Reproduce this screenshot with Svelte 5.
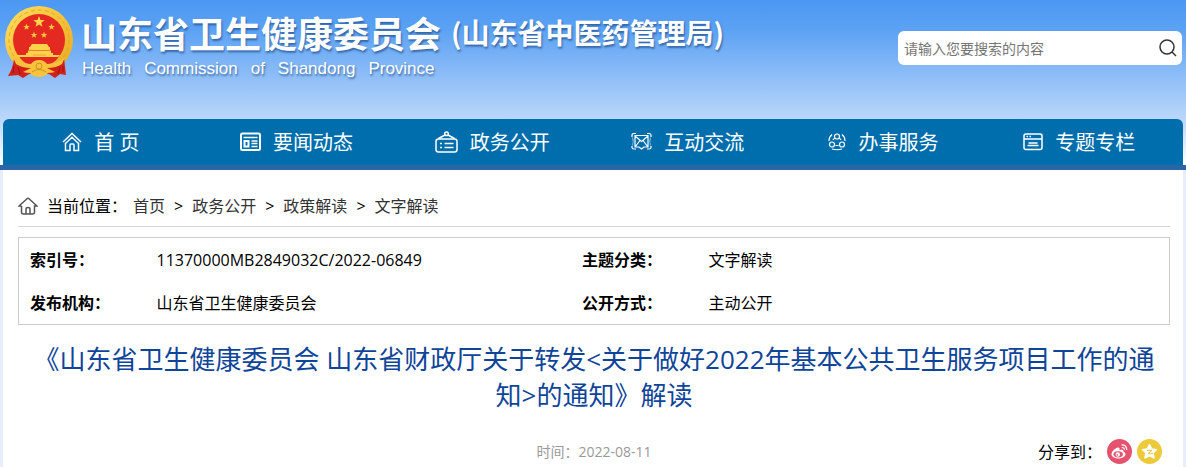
<script>
	let keyword = "";

	const navItems = [
		{ title: "首 页", icon: "home" },
		{ title: "要闻动态", icon: "news" },
		{ title: "政务公开", icon: "board" },
		{ title: "互动交流", icon: "mail" },
		{ title: "办事服务", icon: "service" },
		{ title: "专题专栏", icon: "topic" },
	];

	const crumbs = ["首页", "政务公开", "政策解读", "文字解读"];

	const rows = [
		["索引号：", "11370000MB2849032C/2022-06849", "主题分类：", "文字解读"],
		["发布机构：", "山东省卫生健康委员会", "公开方式：", "主动公开"],
	];

	const star = "M0-5 1.2-1.6 4.8-1.5 1.9.6 2.9 4 0 2-2.9 4-1.9.6-4.8-1.5-1.2-1.6Z";
	const smallStars = [
		[21.5, 21],
		[46.5, 21],
		[29, 29],
		[39, 29],
	];
</script>

<div class="page">
	<header>
		<a class="brand" href="#top">
			<svg class="emblem" viewBox="0 0 68 73" aria-hidden="true">
				<defs>
					<linearGradient id="gold" x1="0" y1="0" x2="1" y2="1">
						<stop offset="0" stop-color="#ffe060" />
						<stop offset="0.5" stop-color="#f5c23a" />
						<stop offset="1" stop-color="#e6a822" />
					</linearGradient>
				</defs>
				<circle cx="34" cy="34" r="34" fill="url(#gold)" />
				<circle cx="34" cy="34" r="30" fill="none" stroke="#e2a72c" stroke-width="1" stroke-dasharray="4 3" />
				<circle cx="34" cy="34" r="26" fill="#e42a20" />
				<path transform="translate(34 16) scale(1.2)" d={star} fill="#fbd84b" />
				{#each smallStars as [x, y]}
					<path transform={`translate(${x} ${y}) scale(.7)`} d={star} fill="#f8c93f" />
				{/each}
				<path d="M25 41 27 38H42L44 41ZM24 41H45V44H24ZM23 44.500H46V47H48V49H55L53 51H14L12 49H21V47H23Z" fill="#fbd24a" />
				<path d="M28 49H41" stroke="#e5a92e" />
				<path d="M9 53Q8 62 3 70L13 69 18 72 24 68H44L50 72 55 68 61 69 59 52Q57 55 53 58L15 58Q11 56 9 53Z" fill="#d4201a" />
				<path d="M15 51.500H53Q50 57 42 59L34 54 26 59Q18 57 15 51.500Z" fill="#e42a20" />
				<path d="M8 51Q15 58 26 58Q29 54 34 54T42 58Q53 58 60 51L57 58Q51 62 42 62L50 66Q46 67 43 67Q40 71 34 71T25 67Q21 67 18 66L26 62Q17 62 11 58Z" fill="#f6c43c" />
				<circle cx="34" cy="60" r="3" fill="none" stroke="#cf9120" />
				<path d="M27 66Q34 61 41 66" fill="none" stroke="#cf9120" />
				<path d="M13 61 15 68M9 60 8 67M55 61 53 68M58 60 58 66" fill="none" stroke="#9f120f" />
			</svg>
			<span class="names">
				<span class="zh">
					<strong>山东省卫生健康委员会</strong>
					<strong class="sub">(山东省中医药管理局)</strong>
				</span>
				<span class="en">
					<span>Health</span>
					<span>Commission</span>
					<span>of</span>
					<span>Shandong</span>
					<span>Province</span>
				</span>
			</span>
		</a>
		<form class="search" on:submit|preventDefault>
			<input type="text" aria-label="搜索" placeholder="请输入您要搜索的内容" bind:value={keyword} />
			<button type="submit" aria-label="搜索">
				<svg width="18" height="18" viewBox="0 0 18 18">
					<circle cx="8" cy="8" r="7" />
					<path d="M13 13 17 17" />
				</svg>
			</button>
		</form>
	</header>

	<nav>
		<ul>
			{#each navItems as item}
				<li>
					<a href="#top">
						{#if item.icon === "home"}
							<svg width="20" height="20" viewBox="0 0 20 20">
								<path d="M1 10 10 1.500 19 10M4 11 10 5.300 16 11M3.500 10.500V18.500H8V13Q8 12 9 12H11Q12 12 12 13V18.500H16.500V10.500" />
							</svg>
						{:else if item.icon === "news"}
							<svg width="21" height="20" viewBox="0 0 21 20">
								<rect x="1" y="1.500" width="19" height="16.500" rx="1.500" stroke-width="2" />
								<path d="M3.500 5.500H17.500M11.500 9H17.500M11.500 11.500H17.500M11.500 14.500H17.500" stroke-width="1.500" />
								<rect x="4.500" y="9" width="4" height="5.500" stroke-width="2" />
							</svg>
						{:else if item.icon === "board"}
							<svg width="23" height="23" viewBox="0 0 23 23">
								<rect x="1" y="8" width="21" height="13" rx="2.500" />
								<circle cx="11.500" cy="2.700" r="1.800" />
								<path d="M3.500 7.500 10 4M19.500 7.500 13 4M5 12.500H7M9.500 12.500H18.500M5 16.500H7M9.500 16.500H18.500" />
							</svg>
						{:else if item.icon === "mail"}
							<svg width="21" height="20" viewBox="0 0 21 20" class="thin">
								<path d="M4 3.500H17V15H13L10.500 17 8 15H4ZM4 4 10.500 9.500 17 4M4 15 9 8.500M17 15 12 8.500M1 5V3.500Q1 1.500 3 1.500H5M16 1.500H18Q20 1.500 20 3.500V5M1 14V15.500Q1 17 3 17H5M16 17H18Q20 17 20 15.500V14" />
								<path d="M1.500 5.500Q3 9.500 1.500 13.500M19.500 5.500Q18 9.500 19.500 13.500" opacity="0.5" />
							</svg>
						{:else if item.icon === "service"}
							<svg width="18" height="20" viewBox="0 0 18 20" class="thin">
								<circle cx="9" cy="4.500" r="2.500" />
								<circle cx="4" cy="12.500" r="2.500" />
								<circle cx="14" cy="12.500" r="2.500" />
								<path d="M5 8Q5.500 6.500 7 6.500M13 8Q12.500 6.500 11 6.500M4 2.500Q1 5 1 9M14 2.500Q17 5 17 9M4 17Q9 18.500 14 17M7.500 13.500H10.500" />
							</svg>
						{:else}
							<svg width="20" height="20" viewBox="0 0 20 20">
								<rect x="1" y="2" width="18" height="15.500" rx="2" />
								<path d="M1 7H19M3.500 4.500H5M6.500 4.500H8M5.500 11H14.500M4.500 13.500H15.500" />
							</svg>
						{/if}
						<span>{item.title}</span>
					</a>
				</li>
			{/each}
		</ul>
	</nav>

	<main>
		<div class="crumbs">
			<svg width="20" height="18" viewBox="0 0 20 18" aria-hidden="true">
				<path d="M3.500 9H1L9 1.700Q10 .8 11 1.700L19 9H16.500V15Q16.500 17 14.500 17H5.500Q3.500 17 3.500 15V9M8 17V12Q8 10.500 10 10.500T12 12V17" />
			</svg>
			<span class="label">当前位置：</span>
			{#each crumbs as crumb, i}
				{#if i > 0}<span class="sep">&gt;</span>{/if}
				<a href="#top">{crumb}</a>
			{/each}
		</div>

		<table>
			<tbody>
				{#each rows as row}
					<tr>
						<th scope="row">{row[0]}</th>
						<td class="wide">{row[1]}</td>
						<th scope="row">{row[2]}</th>
						<td>{row[3]}</td>
					</tr>
				{/each}
			</tbody>
		</table>

		<h1>《山东省卫生健康委员会 山东省财政厅关于转发&lt;关于做好2022年基本公共卫生服务项目工作的通知&gt;的通知》解读</h1>

		<div class="meta">
			<time datetime="2022-08-11">时间：2022-08-11</time>
			<div class="share">
				<span>分享到：</span>
				<a href="#weibo" aria-label="微博">
					<svg width="25" height="25" viewBox="0 0 25 25">
						<circle cx="12.500" cy="12.500" r="12.500" fill="#e6516e" />
						<path d="M11 8.500C8 9 4.500 12.500 4.500 15.300C4.500 18 8 19.500 11.500 19.500C15.500 19.500 18.500 17.200 18.500 15C18.500 13.600 17.500 13 16.300 12.700C16.800 11 15.300 10.300 12.500 11.300C12.800 9.500 12.500 8.300 11 8.500Z" fill="#fff" />
						<ellipse cx="11.200" cy="15.300" rx="4.700" ry="3.100" fill="#e6516e" />
						<circle cx="10.800" cy="15.500" r="2.200" fill="#fff" />
						<circle cx="10.300" cy="15.900" r=".8" fill="#e6516e" />
						<path d="M14.500 6Q19.500 5.500 19.800 11M14.800 8.500Q17.200 8.300 17.400 10.800" fill="none" stroke="#fff" stroke-width="1.200" />
					</svg>
				</a>
				<a href="#qzone" aria-label="QQ空间">
					<svg width="25" height="25" viewBox="0 0 25 25">
						<circle cx="12.500" cy="12.500" r="12.500" fill="#ecca3a" />
						<path d="M12.500 5 14.900 9.800 20 10.500 16.400 14.100 17.300 19.300 12.500 17 7.700 19.300 8.600 14.100 5 10.500 10.100 9.800Z" fill="#fff" stroke="#fff" stroke-linejoin="round" />
						<path d="M10 11.500Q13 11 15 11.500L11 14.500Q13.500 15 16 14.500" fill="none" stroke="#ecca3a" />
					</svg>
				</a>
			</div>
		</div>
	</main>
</div>

<style>
	:global(body) {
		margin: 0;
		background: #e6eefc;
	}

	.page {
		min-height: 100vh;
		display: flex;
		flex-direction: column;
		background: linear-gradient(#4b98f2 0, #5ca2f4 30px, #98c3f8 86px, #bbd8fb 120px, #fff 165px, #e6eefc 165px);
		font-family: "Open Sans", "Noto Sans CJK SC", sans-serif;
		font-size: 16px;
		line-height: 24px;
		color: #000;
	}

	a {
		color: inherit;
		text-decoration: none;
	}

	header {
		display: flex;
		justify-content: space-between;
		height: 119px;
		padding: 0 4px 0 5px;
		box-sizing: border-box;
	}

	.brand {
		display: flex;
		gap: 8px;
		padding-top: 6px;
		color: #fff;
		white-space: nowrap;
		text-shadow: 1px 2px 2px rgba(20, 60, 120, 0.6);
	}

	.emblem {
		width: 68px;
		height: 73px;
	}

	.names {
		display: flex;
		flex-direction: column;
	}

	.zh {
		display: flex;
		align-items: center;
		gap: 10px;
		font-family: "Noto Sans CJK SC", sans-serif;
		font-size: 36px;
		line-height: 52px;
	}

	.sub {
		font-size: 28px;
	}

	.en {
		display: flex;
		gap: 13px;
		padding-left: 1px;
		font-family: "Liberation Sans", Arial, sans-serif;
		font-size: 17px;
		line-height: 22px;
	}

	.search {
		display: flex;
		align-items: center;
		width: 284px;
		height: 34px;
		margin-top: 31px;
		border-radius: 6px;
		background: #fff;
	}

	.search input {
		flex: 1;
		min-width: 0;
		border: 0;
		outline: 0;
		padding: 0 6px;
		background: none;
		font-family: inherit;
		font-size: 14px;
	}

	.search input::placeholder {
		color: #757575;
	}

	.search button {
		display: flex;
		border: 0;
		padding: 0 5px;
		background: none;
		cursor: pointer;
	}

	.search svg {
		fill: none;
		stroke: #333;
		stroke-width: 1.5;
	}

	nav {
		padding: 0 3px;
		border-bottom: 5px solid #2c65a6;
	}

	nav ul {
		display: grid;
		grid-template-columns: repeat(6, 1fr);
		margin: 0;
		padding: 0 6px 0 0;
		list-style: none;
		border-radius: 6px 6px 0 0;
		background: #006eac;
	}

	nav a {
		display: flex;
		align-items: center;
		justify-content: center;
		gap: 12px;
		height: 46px;
		color: #fff;
		font-size: 20px;
	}

	nav span {
		padding-top: 2px;
	}

	nav svg {
		fill: none;
		stroke: #fff;
		stroke-width: 1.5;
	}

	nav .thin {
		stroke-width: 1.2;
	}

	main {
		flex: 1;
		margin: 0 3px;
		padding: 0 13px 0 15px;
		background: #fff;
	}

	.crumbs {
		display: flex;
		align-items: center;
		gap: 9px;
		height: 40px;
		padding-top: 16px;
		border-bottom: 1px solid #d6d6d6;
		color: #333;
	}

	.crumbs svg {
		fill: none;
		stroke: #555;
		stroke-width: 1.5;
	}

	.crumbs .label {
		margin-right: -3px;
		color: #000;
	}

	.crumbs .sep {
		color: #000;
		font-size: 16px;
	}

	table {
		width: 100%;
		margin-top: 10px;
		border: 1px solid #ccc;
		border-spacing: 0;
		table-layout: fixed;
	}

	th,
	td {
		height: 43px;
		padding: 0 11px;
		text-align: left;
	}

	th {
		width: 11%;
		box-sizing: border-box;
		white-space: nowrap;
	}

	.wide {
		width: 37%;
		box-sizing: border-box;
	}

	h1 {
		margin: 16px 0 0;
		padding: 0 8px;
		color: #0f4599;
		font-size: 26px;
		font-weight: 400;
		line-height: 36px;
		text-align: center;
	}

	.meta {
		display: grid;
		grid-template-columns: 1fr auto 1fr;
		align-items: center;
		margin-top: 26px;
	}

	time {
		grid-column: 2;
		color: #999;
		font-size: 14px;
	}

	.share {
		display: flex;
		align-items: center;
		justify-content: flex-end;
		gap: 5px;
		padding-right: 8px;
	}

	.share a {
		display: flex;
	}
</style>
